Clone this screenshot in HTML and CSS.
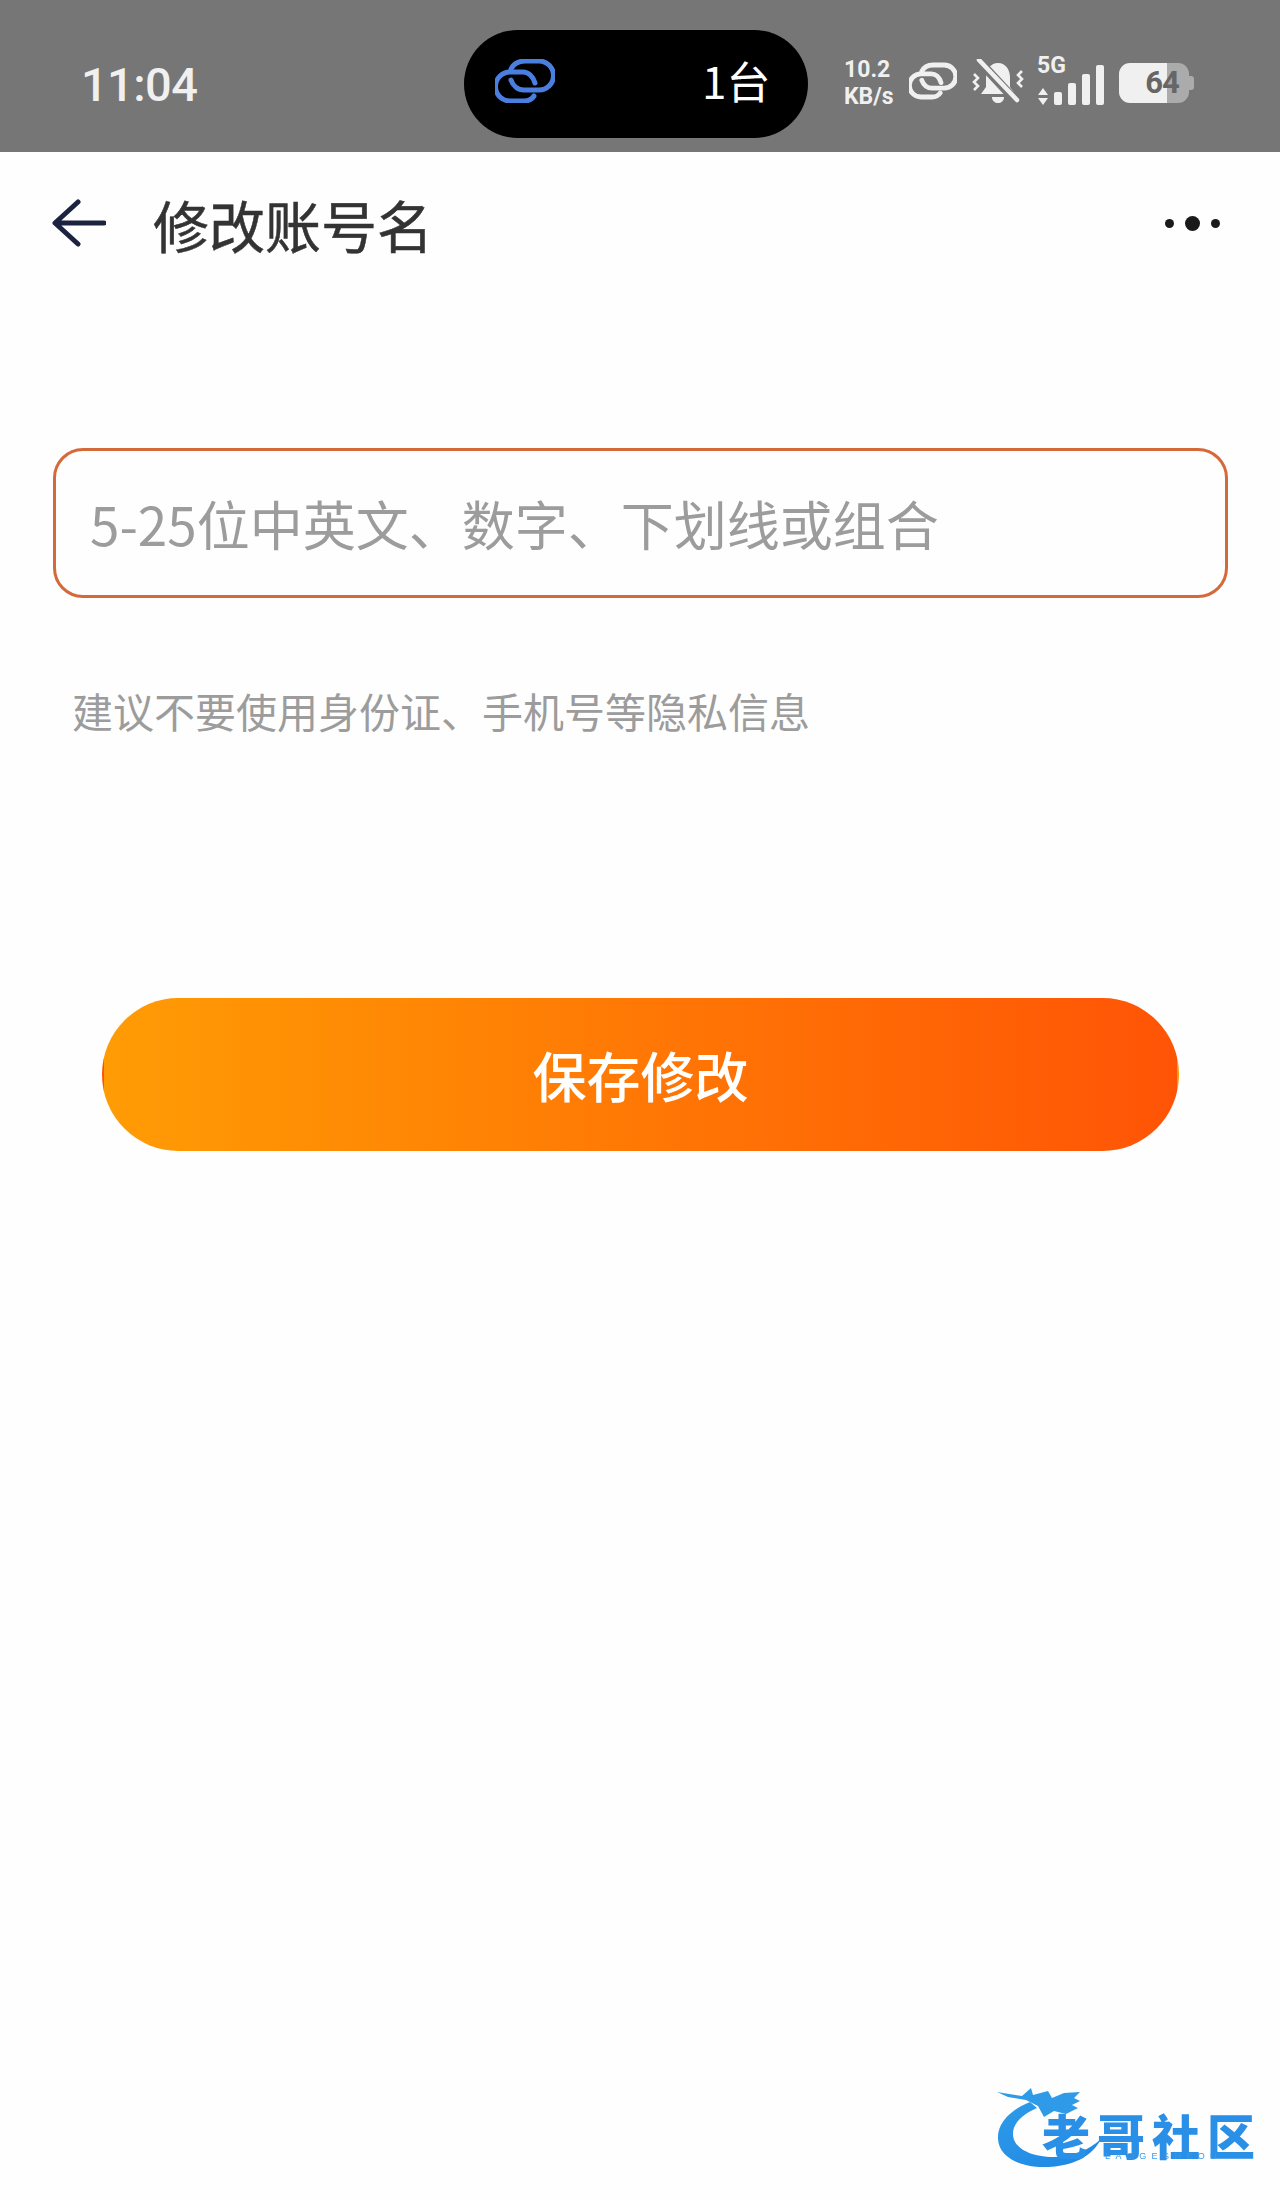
FILE: index.html
```html
<!DOCTYPE html>
<html lang="zh-CN">
<head>
    <meta charset="UTF-8">
    <meta name="viewport" content="width=device-width, initial-scale=1.0">
    <title>修改账号名</title>
    <link rel="stylesheet" href="styles.css">
</head>
<body>
    <div class="page">
        <!-- status bar -->
        <div class="statusbar">
            <div class="time">11:04</div>
            <div class="island">
                <svg class="island-link" viewBox="0 0 60 44" fill="none" stroke="#4a7fe0" stroke-width="5" stroke-linecap="round">
                    <path d="M16 10C19 4 24 2 30 2H44A14.5 14.5 0 0 1 44 31H29C23 31 18 27 16 21"/>
                    <path d="M40 24C38 17 33 13 28 13H15A14.5 14.5 0 0 0 15 42H29C33 42 37 40 39 37"/>
                </svg>
                <div class="island-count">1台</div>
            </div>
            <div class="speed">
                <div>10.2</div>
                <div>KB/s</div>
            </div>
            <svg class="status-link" viewBox="0 0 60 44" fill="none" stroke="#f0f0f0" stroke-width="6" stroke-linecap="round">
                <path d="M16 10C19 4 24 2 30 2H44A14.5 14.5 0 0 1 44 31H29C23 31 18 27 16 21"/>
                <path d="M40 24C38 17 33 13 28 13H15A14.5 14.5 0 0 0 15 42H29C33 42 37 40 39 37"/>
            </svg>
            <svg class="bell" viewBox="0 0 54 46">
                <path d="M27 4C35 4 39 11 39 19V28L44 35H10L15 28V19C15 11 19 4 27 4Z" fill="#f0f0f0"/>
                <path d="M21 38H33C33 46 21 46 21 38Z" fill="#f0f0f0"/>
                <path d="M7 1L45 42" stroke="#767676" stroke-width="9"/>
                <path d="M8 1L46 41" stroke="#f0f0f0" stroke-width="4.5" stroke-linecap="round"/>
                <path d="M3 15L7 19L3 23L7 27L3 31M51 12L47 16L51 20L47 24L51 28" fill="none" stroke="#f0f0f0" stroke-width="2.6"/>
            </svg>
            <div class="signal">
                <span class="signal-type">5G</span>
                <svg class="signal-bars" viewBox="0 0 68 41" fill="#f0f0f0">
                    <path d="M7 24L12 31H2ZM7 41L2 34H12Z"/>
                    <rect x="18" y="28" width="8" height="13" rx="2"/>
                    <rect x="32" y="19" width="8" height="22" rx="2"/>
                    <rect x="46" y="10" width="8" height="31" rx="2"/>
                    <rect x="60" y="1" width="8" height="40" rx="2"/>
                </svg>
            </div>
            <div class="battery">64</div>
        </div>

        <!-- title -->
        <div class="header">
            <svg class="back" viewBox="0 0 54 48" fill="none" stroke="#1c2340" stroke-width="5" stroke-linecap="round" stroke-linejoin="round">
                <path d="M52 24H4M26 3L3 24L26 45"/>
            </svg>
            <h1 class="title">修改账号名</h1>
            <div class="more">
                <span class="dot"></span>
                <span class="dot dot-big"></span>
                <span class="dot"></span>
            </div>
        </div>

        <!-- form -->
        <div class="content">
            <input class="nameinput" type="text" placeholder="5-25位中英文、数字、下划线或组合">
            <p class="hint">建议不要使用身份证、手机号等隐私信息</p>
            <button class="savebtn">保存修改</button>
        </div>

        <!-- watermark -->
        <div class="watermark">
            <svg class="dragon" viewBox="0 0 264 81">
                <defs>
                    <linearGradient id="swoosh" x1="0" y1="0" x2="1" y2="1">
                        <stop offset="0" stop-color="#2f9be8"/>
                        <stop offset="1" stop-color="#1c86e4"/>
                    </linearGradient>
                </defs>
                <path d="M34 15C12 24 1 38 2 52C3 70 24 81 52 80C76 79 96 70 105 52C92 64 74 71 54 70C32 69 17 60 17 47C17 36 27 27 41 21Z" fill="url(#swoosh)"/>
                <path d="M1 5L26 9L35 1L37 8L52 4L56 11L68 6L84 5L78 11L84 14L76 18L82 21L70 27L58 24L48 30L42 19L30 13L12 10Z" fill="#2f9be8"/>
            </svg>
            <div class="wm-name">老哥社区</div>
            <div class="wm-sub">LAOGESHEOU</div>
        </div>
    </div>
</body>
</html>
```

FILE: styles.css
```css
*{
    margin:0;
    padding:0;
    box-sizing:border-box;
}
body{
    background-color:#fefefe;
    font-family:"Noto Sans CJK SC","Noto Sans",sans-serif;
}
.page{
    width:1280px;
    height:2200px;
    position:relative;
    overflow:hidden;
}

/* status bar */
.statusbar{
    height:152px;
    background-color:#767676;
    padding:16px 0 0 81px;
    display:flex;
    align-items:center;
    color:#f0f0f0;
}
.time{
    width:383px;
    font-family:Roboto,sans-serif;
    font-size:47px;
    font-weight:500;
    letter-spacing:-.6px;
}
.island{
    width:344px;
    height:108px;
    border-radius:54px;
    background-color:#000;
    display:flex;
    align-items:center;
    padding-left:31px;
}
.island-link{
    width:60px;
    height:44px;
    margin-top:-6px;
}
.island-count{
    margin-left:147px;
    margin-top:-8px;
    font-size:44px;
    line-height:50px;
    color:#fff;
}
.speed{
    width:65px;
    margin-left:36px;
    font-family:Roboto,sans-serif;
    font-size:23px;
    font-weight:700;
    line-height:27px;
    margin-top:-3px;
}
.status-link{
    width:48px;
    height:38px;
    margin-left:0;
    margin-top:-6px;
}
.bell{
    width:54px;
    height:46px;
    margin-left:14px;
    margin-top:-4px;
}
.signal{
    width:68px;
    height:44px;
    margin-left:11px;
    position:relative;
    margin-top:-3px;
}
.signal-type{
    position:absolute;
    left:1px;
    top:-7px;
    font-family:Roboto,sans-serif;
    font-size:23px;
    font-weight:700;
    line-height:24px;
}
.signal-bars{
    position:absolute;
    left:0;
    bottom:0;
    width:68px;
    height:41px;
}
.battery{
    width:70px;
    height:40px;
    margin-left:15px;
    margin-top:-3px;
    border-radius:11px;
    background:linear-gradient(to right,#f0f0f0 68%,#ababab 68%);
    position:relative;
    color:#666;
    font-family:Roboto,sans-serif;
    font-size:31px;
    font-weight:700;
    line-height:40px;
    text-align:center;
    letter-spacing:-1px;
    padding-left:16px;
}
.battery::after{
    content:"";
    position:absolute;
    right:-5px;
    top:13px;
    width:5px;
    height:14px;
    border-radius:0 3px 3px 0;
    background-color:#ababab;
}

/* title */
.header{
    height:142px;
    padding:0 60px 0 52px;
    display:flex;
    align-items:center;
}
.back{
    width:54px;
    height:48px;
}
.title{
    margin-left:47px;
    font-size:56px;
    font-weight:400;
    color:#333;
    flex:1;
    -webkit-text-stroke:.5px #333;
}
.more{
    display:flex;
    align-items:center;
    gap:11px;
}
.dot{
    width:9px;
    height:9px;
    border-radius:50%;
    background-color:#1a1a1a;
}
.dot-big{
    width:15px;
    height:15px;
}

/* form */
.content{
    padding:154px 52px 0 53px;
}
.nameinput{
    display:block;
    width:100%;
    height:150px;
    padding-left:34px;
    border:3px solid #d4693a;
    border-radius:30px;
    background:none;
    outline:none;
    font-family:"Noto Sans CJK SC","Noto Sans",sans-serif;
    font-size:53px;
}
.nameinput::placeholder{
    color:#9c9c9c;
    opacity:1;
}
.hint{
    margin-top:82px;
    padding-left:19px;
    font-size:41px;
    line-height:60px;
    color:#9c9c9c;
}
.savebtn{
    display:block;
    width:1077px;
    height:153px;
    margin:258px 0 0 49px;
    border:2px solid transparent;
    border-radius:77px;
    background-image:linear-gradient(to right,#ff9c04,#ff5406);
    background-origin:padding-box;
    color:#fff;
    font-family:"Noto Sans CJK SC","Noto Sans",sans-serif;
    font-size:54px;
    font-weight:500;
}

/* watermark */
.watermark{
    position:absolute;
    right:20px;
    bottom:32px;
    width:264px;
    height:81px;
    filter:blur(.6px);
}
.dragon{
    position:absolute;
    left:0;
    top:0;
    width:264px;
    height:81px;
}
.wm-name{
    position:absolute;
    left:46px;
    top:18px;
    font-size:48px;
    font-weight:900;
    line-height:58px;
    letter-spacing:7px;
    color:#2a8fe6;
    white-space:nowrap;
}
.wm-sub{
    position:absolute;
    left:109px;
    top:64px;
    font-family:"Liberation Sans",sans-serif;
    font-size:9px;
    line-height:10px;
    letter-spacing:5.4px;
    color:#3d97e6;
    white-space:nowrap;
}
```
